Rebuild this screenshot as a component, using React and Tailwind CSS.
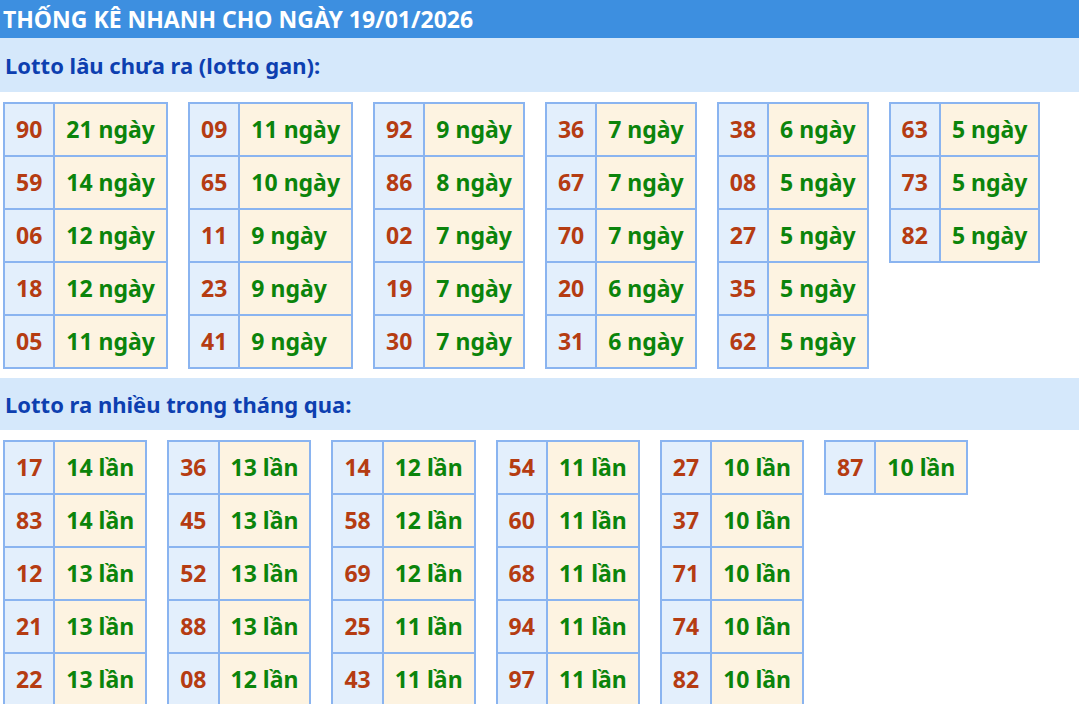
const gan = [
  [['90', '21'], ['59', '14'], ['06', '12'], ['18', '12'], ['05', '11']],
  [['09', '11'], ['65', '10'], ['11', '9'], ['23', '9'], ['41', '9']],
  [['92', '9'], ['86', '8'], ['02', '7'], ['19', '7'], ['30', '7']],
  [['36', '7'], ['67', '7'], ['70', '7'], ['20', '6'], ['31', '6']],
  [['38', '6'], ['08', '5'], ['27', '5'], ['35', '5'], ['62', '5']],
  [['63', '5'], ['73', '5'], ['82', '5']],
]
const nhieu = [
  [['17', '14'], ['83', '14'], ['12', '13'], ['21', '13'], ['22', '13']],
  [['36', '13'], ['45', '13'], ['52', '13'], ['88', '13'], ['08', '12']],
  [['14', '12'], ['58', '12'], ['69', '12'], ['25', '11'], ['43', '11']],
  [['54', '11'], ['60', '11'], ['68', '11'], ['94', '11'], ['97', '11']],
  [['27', '10'], ['37', '10'], ['71', '10'], ['74', '10'], ['82', '10']],
  [['87', '10']],
]

function Bang({ rows, unit }) {
  return (
    <table className="border-collapse border-2 border-[#8ab4f0] self-start">
      <tbody>
        {rows.map(([so, n], i) => (
          <tr key={i} className="h-[53px]">
            <td className="border-2 border-[#8ab4f0] bg-[#e3effc] text-[#b53c12] px-[11px] text-center">{so}</td>
            <td className="border-2 border-[#8ab4f0] bg-[#fdf3e1] text-[#0b840b] px-[11px] whitespace-nowrap">{n} {unit}</td>
          </tr>
        ))}
      </tbody>
    </table>
  )
}

export default function App() {
  return (
    <div className="w-[1079px] h-[704px] overflow-hidden bg-white font-[family-name:'Liberation_Sans',Arial,sans-serif] font-bold">
      <div className="h-[38px] bg-[#3d8fe0] text-white text-[23px] px-[3px] flex items-center">THỐNG KÊ NHANH CHO NGÀY 19/01/2026</div>
      <div className="h-[54px] bg-[#d5e8fb] text-[#0d3fb0] text-[22px] px-[5px] flex items-center">Lotto lâu chưa ra (lotto gan):</div>
      <div className="flex gap-[20px] pl-[3px] pt-[10px] h-[286px] text-[23px]">
        {gan.map((r, i) => <Bang key={i} rows={r} unit="ngày" />)}
      </div>
      <div className="h-[52px] bg-[#d5e8fb] text-[#0d3fb0] text-[22px] px-[5px] flex items-center">Lotto ra nhiều trong tháng qua:</div>
      <div className="flex gap-[20px] pl-[3px] pt-[10px] text-[23px]">
        {nhieu.map((r, i) => <Bang key={i} rows={r} unit="lần" />)}
      </div>
    </div>
  )
}
